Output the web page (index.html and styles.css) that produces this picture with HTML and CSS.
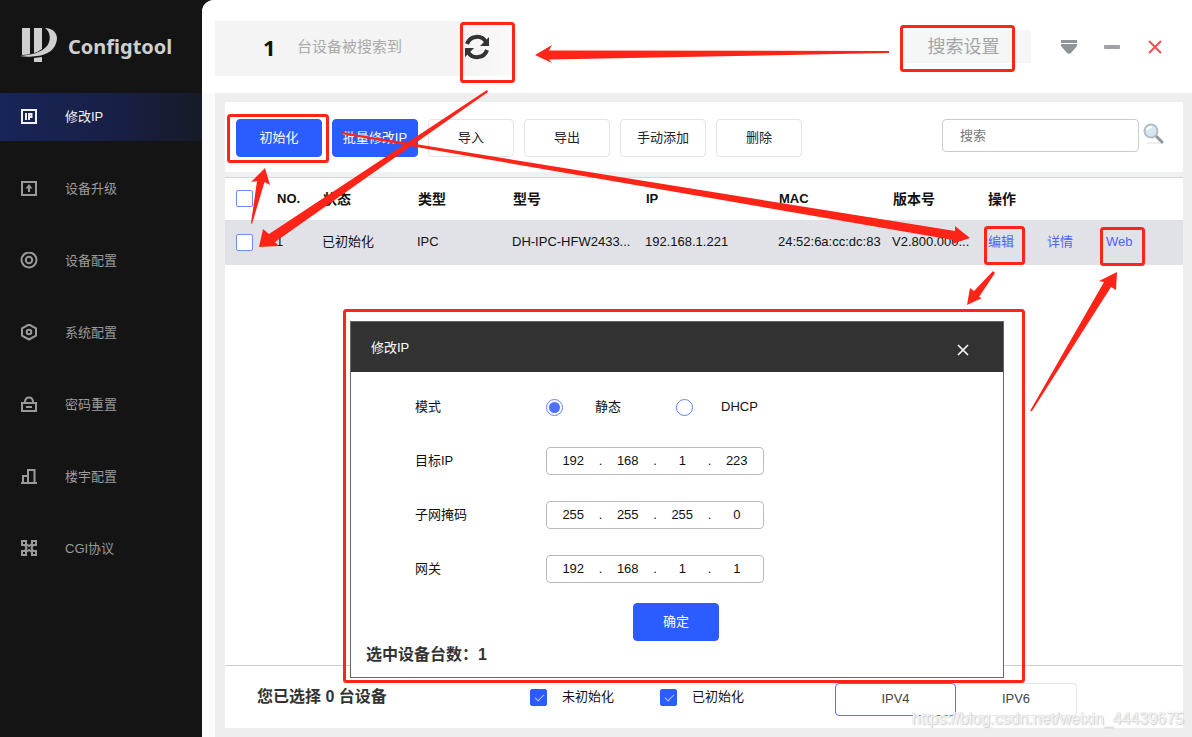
FILE: index.html
```html
<!DOCTYPE html>
<html lang="zh-CN">
<head>
<meta charset="utf-8">
<title>Configtool</title>
<link rel="stylesheet" href="styles.css">
</head>
<body>
<div class="app">
  <aside class="sidebar">
    <div class="brand">
      <svg class="brand-logo" width="38" height="38" viewBox="0 0 38 38" fill="#cfcfcf">
        <path d="M2 2H10V28Q6 29 2 29Z"/>
        <path d="M14 2H22V23Q18 26 14 27Z"/>
        <path d="M25 2C33 2 37 7 37 13C36 23 28 29 17 30C10 31 5 31 0 30C12 29 22 26 27 20C31 15 31 6 25 2Z"/>
        <path d="M14 32L22 31V36H14Z"/>
      </svg>
      <span class="brand-name">Configtool</span>
    </div>
    <nav class="menu">
      <a class="menu-item active" href="#ip">
        <svg width="18" height="18" viewBox="0 0 18 18" fill="none" stroke="currentColor" stroke-width="2"><rect x="2" y="2" width="14" height="13"/><path d="M6 5V12M9 12V6H11.500V9H9"/></svg>
        <span>修改IP</span>
      </a>
      <a class="menu-item" href="#upgrade">
        <svg width="18" height="18" viewBox="0 0 18 18" fill="none" stroke="currentColor" stroke-width="2"><rect x="2" y="2" width="14" height="13"/><path d="M9 12V7"/><path d="M9 4L12.500 8.500H5.500Z" fill="currentColor" stroke="none"/></svg>
        <span>设备升级</span>
      </a>
      <a class="menu-item" href="#device">
        <svg width="18" height="18" viewBox="0 0 18 18" fill="none" stroke="currentColor" stroke-width="2"><circle cx="9" cy="8" r="7.500"/><circle cx="9" cy="8" r="3.200"/></svg>
        <span>设备配置</span>
      </a>
      <a class="menu-item" href="#system">
        <svg width="18" height="18" viewBox="0 0 18 18" fill="none" stroke="currentColor" stroke-width="2"><path d="M9 0.500L16 4.300V11.700L9 15.500L2 11.700V4.300Z"/><circle cx="9" cy="8" r="2.300"/></svg>
        <span>系统配置</span>
      </a>
      <a class="menu-item" href="#password">
        <svg width="18" height="18" viewBox="0 0 18 18" fill="none" stroke="currentColor" stroke-width="2"><rect x="2" y="7" width="14" height="8"/><path d="M5 7V5.500Q5.500 1.500 9 1.500T13 5.500V7M6 11H12"/></svg>
        <span>密码重置</span>
      </a>
      <a class="menu-item" href="#building">
        <svg width="18" height="18" viewBox="0 0 18 18" fill="none" stroke="currentColor" stroke-width="2"><path d="M1 15H17M3 15V8H8V15M8 10V2H14.500V15"/></svg>
        <span>楼宇配置</span>
      </a>
      <a class="menu-item" href="#cgi">
        <svg width="18" height="18" viewBox="0 0 18 18" fill="none" stroke="currentColor" stroke-width="2"><rect x="2" y="1" width="4" height="4"/><rect x="12" y="1" width="4" height="4"/><rect x="2" y="11" width="4" height="4"/><rect x="12" y="11" width="4" height="4"/><path d="M6 4L9 6L12 4M6 12L9 10L12 12M5 5L6.500 8L5 11M13 5L11.500 8L13 11"/></svg>
        <span>CGI协议</span>
      </a>
    </nav>
  </aside>

  <main class="main">
    <header class="topbar">
      <div class="found">
        <strong class="found-count">1</strong>
        <span class="found-text">台设备被搜索到</span>
        <button class="icon-button" type="button" aria-label="刷新">
          <svg width="26" height="26" viewBox="0 0 26 26" fill="none" stroke="#333" stroke-width="4"><path d="M3 10A10.500 10.500 0 0 1 22 8M23 16A10.500 10.500 0 0 1 4 18"/><path d="M25 3V12H16ZM1 23V14H10Z" fill="#333" stroke="none"/></svg>
        </button>
      </div>
      <div class="top-actions">
        <button class="search-settings" type="button">搜索设置</button>
        <div class="window-controls">
          <button class="icon-button" type="button" aria-label="菜单"><svg width="16" height="16" viewBox="0 0 16 16" fill="#8f9496"><path d="M0 1H16V4H0ZM0 5H16V7L10 14Q8 15.500 6 14L0 7Z"/></svg></button>
          <button class="icon-button" type="button" aria-label="最小化"><svg width="16" height="16" viewBox="0 0 16 16" fill="#a0a3a5"><rect y="6" width="16" height="4" rx="1"/></svg></button>
          <button class="icon-button" type="button" aria-label="关闭"><svg width="16" height="16" viewBox="0 0 16 16" stroke="#f04e58" stroke-width="2"><path d="M2 2L14 14M14 2L2 14"/></svg></button>
        </div>
      </div>
    </header>

    <div class="workspace">
      <section class="panel">
        <div class="toolbar">
          <button class="btn primary" type="button">初始化</button>
          <button class="btn primary" type="button">批量修改IP</button>
          <button class="btn" type="button">导入</button>
          <button class="btn" type="button">导出</button>
          <button class="btn" type="button">手动添加</button>
          <button class="btn" type="button">删除</button>
          <form class="search">
            <input class="search-input" type="text" placeholder="搜索" aria-label="搜索">
            <button class="icon-button" type="button" aria-label="查找">
              <svg width="22" height="22" viewBox="0 0 22 22"><ellipse cx="12" cy="20" rx="9" ry="1" fill="#ececec"/><path d="M13 13L19 19" stroke="#8f979c" stroke-width="3" stroke-linecap="round"/><circle cx="8" cy="8" r="6.500" fill="#d5e7f3" stroke="#b5bec5" stroke-width="2"/><path d="M4 7Q5 4 9 4" fill="none" stroke="#fff" stroke-width="2"/></svg>
            </button>
          </form>
        </div>

        <div class="table-area">
          <table class="devices">
            <colgroup><col class="c-check"><col class="c-no"><col class="c-mid"><col class="c-mid"><col class="c-wide"><col class="c-wide"><col class="c-mac"><col class="c-mid"><col></colgroup>
            <thead>
              <tr><th><input class="check" type="checkbox" aria-label="全选"></th><th>NO.</th><th>状态</th><th>类型</th><th>型号</th><th>IP</th><th>MAC</th><th>版本号</th><th>操作</th></tr>
            </thead>
            <tbody>
              <tr><td><input class="check" type="checkbox" aria-label="选择设备 1"></td><td>1</td><td>已初始化</td><td>IPC</td><td>DH-IPC-HFW2433...</td><td>192.168.1.221</td><td>24:52:6a:cc:dc:83</td><td>V2.800.000...</td><td><div class="row-links"><a href="#edit">编辑</a><a href="#detail">详情</a><a href="#web">Web</a></div></td></tr>
            </tbody>
          </table>
        </div>

        <footer class="statusbar">
          <p class="selected">您已选择 0 台设备</p>
          <div class="filters">
            <label class="filter"><input class="check" type="checkbox" checked>未初始化</label>
            <label class="filter"><input class="check" type="checkbox" checked>已初始化</label>
          </div>
          <div class="ip-tabs">
            <button class="ip-tab current" type="button">IPV4</button>
            <button class="ip-tab" type="button">IPV6</button>
          </div>
        </footer>
      </section>
    </div>
  </main>

  <section class="dialog" role="dialog" aria-labelledby="dialog-title">
    <header class="dialog-head">
      <h2 class="dialog-title" id="dialog-title">修改IP</h2>
      <button class="icon-button" type="button" aria-label="关闭对话框"><svg width="12" height="12" viewBox="0 0 12 12" stroke="#fff" stroke-width="1.600"><path d="M1 1L11 11M11 1L1 11"/></svg></button>
    </header>
    <form class="dialog-form">
      <div class="field">
        <span class="field-label">模式</span>
        <div class="modes">
          <label class="mode"><input class="radio" type="radio" name="mode" checked>静态</label>
          <label class="mode"><input class="radio" type="radio" name="mode">DHCP</label>
        </div>
      </div>
      <div class="field">
        <label class="field-label" for="ip1">目标IP</label>
        <div class="ip-box"><input id="ip1" type="text" value="192"><i>.</i><input type="text" value="168" aria-label="目标IP 2"><i>.</i><input type="text" value="1" aria-label="目标IP 3"><i>.</i><input type="text" value="223" aria-label="目标IP 4"></div>
      </div>
      <div class="field">
        <label class="field-label" for="mask1">子网掩码</label>
        <div class="ip-box"><input id="mask1" type="text" value="255"><i>.</i><input type="text" value="255" aria-label="子网掩码 2"><i>.</i><input type="text" value="255" aria-label="子网掩码 3"><i>.</i><input type="text" value="0" aria-label="子网掩码 4"></div>
      </div>
      <div class="field">
        <label class="field-label" for="gw1">网关</label>
        <div class="ip-box"><input id="gw1" type="text" value="192"><i>.</i><input type="text" value="168" aria-label="网关 2"><i>.</i><input type="text" value="1" aria-label="网关 3"><i>.</i><input type="text" value="1" aria-label="网关 4"></div>
      </div>
      <button class="btn primary confirm" type="button">确定</button>
    </form>
    <p class="dialog-count">选中设备台数：1</p>
  </section>

  <svg class="annotations" width="1192" height="737" viewBox="0 0 1192 737" aria-hidden="true">
    <g fill="none" stroke="#ff2418" stroke-width="3">
      <rect x="461.500" y="23.500" width="52" height="58" rx="2"/>
      <rect x="901.500" y="26.500" width="112" height="44" rx="2"/>
      <rect x="228.500" y="115.500" width="99" height="46" rx="2"/>
      <rect x="985.500" y="227.500" width="38" height="36" rx="2"/>
      <rect x="1101.500" y="228.500" width="42" height="36" rx="2"/>
      <rect x="344.500" y="310.500" width="679" height="371" rx="2"/>
    </g>
    <g fill="#ff2418">
      <path d="M535 55L552 45L549 50.500L889 51L889 53L549 59.500L552 63Z"/>
      <path d="M259 247L263 229L269 234L487 90L488 92L275 242L279 246Z"/>
      <path d="M265 168L270 185L264.500 182L252 224L251 223L257 181L251 182Z"/>
      <path d="M970 238L955 226L955 231L341 132L341 134L953 240L952 244Z"/>
      <path d="M967 305L970 288L974 291L993 271L995 273L979 297L982 298Z"/>
      <path d="M1117 272L1116 290L1111 287L1032 411L1030 411L1104 282L1099 281Z"/>
    </g>
  </svg>
  <span class="watermark">https://blog.csdn.net/weixin_44439675</span>
</div>
</body>
</html>
```
FILE: styles.css
```css
* {
  box-sizing: border-box;
}

body {
  margin: 0;
  font: 13px/20px "Liberation Sans", "Noto Sans CJK SC", sans-serif;
  color: #111;
}

button,
input {
  font: inherit;
  color: inherit;
  margin: 0;
}

a {
  text-decoration: none;
}

.app {
  position: relative;
  display: flex;
  min-height: 100vh;
  background: #141414;
  overflow: hidden;
}

/* Sidebar */
.sidebar {
  flex: 0 0 202px;
}

.brand {
  display: flex;
  align-items: center;
  gap: 10px;
  height: 93px;
  padding-left: 20px;
}

.brand-logo {
  margin-bottom: 4px;
}

.brand-name {
  font: 700 20px/24px "Noto Sans", sans-serif;
  color: #cfcfcf;
}

.menu {
  display: grid;
  gap: 24px;
}

.menu-item {
  display: flex;
  align-items: center;
  gap: 27px;
  height: 48px;
  padding-left: 20px;
  color: #9a9a9a;
}

.menu-item.active {
  color: #f2f2f2;
  background: linear-gradient(90deg, #182558, #181f45 60%, #161a27);
}

/* Main area */
.main {
  flex: 1;
  min-width: 0;
  display: flex;
  flex-direction: column;
  background: #fafafc;
  border-top-left-radius: 12px;
  overflow: hidden;
}

.topbar {
  display: flex;
  justify-content: space-between;
  align-items: center;
  height: 93px;
  padding: 0 29px 0 13px;
  background: #fff;
}

.icon-button {
  display: inline-flex;
  padding: 0;
  border: 0;
  background: none;
}

.found {
  display: flex;
  align-items: center;
  width: 298px;
  height: 55px;
  margin-top: 4px;
  padding: 0 23px 4px 48px;
  background: linear-gradient(90deg, #f4f4f4 85%, #fafafa);
}

.found-count {
  width: 34px;
  font: 700 22px/28px "Noto Sans", sans-serif;
}

.found-text {
  flex: 1;
  font-size: 15px;
  color: #aaa;
}

.top-actions {
  display: flex;
  align-items: center;
  gap: 30px;
}

.search-settings {
  width: 131px;
  height: 33px;
  padding: 0 4px 0 0;
  border: 0;
  background: #f5f6f6;
  font-size: 18px;
  color: #a3a5a7;
}

.window-controls {
  display: flex;
  gap: 27px;
}

.workspace {
  flex: 1;
  display: flex;
  margin-left: 13px;
  padding: 9px 9px 9px 10px;
  background: #eee;
}

.panel {
  flex: 1;
  min-width: 0;
  display: flex;
  flex-direction: column;
  background: #fff;
}

.toolbar {
  display: flex;
  gap: 10px;
  height: 70px;
  padding: 17px 18px 0 11px;
}

.btn {
  width: 86px;
  height: 38px;
  padding: 0;
  border: 1px solid #e2e4e7;
  border-radius: 4px;
  background: #fff;
  color: #222;
}

.btn.primary {
  border-color: #2b5cff;
  background: #2b5cff;
  color: #fff;
}

.search {
  display: flex;
  gap: 4px;
  margin-left: auto;
  align-items: flex-start;
}

.search .icon-button {
  padding-top: 4px;
}

.search-input {
  width: 197px;
  height: 33px;
  padding: 0 17px;
  border: 1px solid #ccc;
  border-radius: 4px;
}

.search-input::placeholder {
  color: #777;
}

/* Device table */
.table-area {
  flex: 1;
  border-top: 5px solid #eef0f2;
}

.devices {
  width: 100%;
  table-layout: fixed;
  border-collapse: collapse;
  border-top: 1px solid #d5d8db;
}

.c-check { width: 51px; }
.c-no { width: 46px; }
.c-mid { width: 95px; }
.c-wide { width: 133px; }
.c-mac { width: 114px; }

.devices th,
.devices td {
  padding: 0;
  text-align: left;
  white-space: nowrap;
}

.devices th {
  height: 42px;
  padding-left: 1px;
  font-size: 14px;
}

.devices th:nth-child(2),
.devices th:nth-child(6),
.devices th:nth-child(7) {
  font-size: 13px;
}

.devices td {
  height: 45px;
}

.devices tbody tr {
  background: #e1e2e8;
}

.devices th:first-child,
.devices td:first-child {
  padding-left: 11px;
}

.row-links {
  display: flex;
  gap: 33px;
  padding-left: 1px;
}

.row-links a {
  color: #4a63ff;
}

.check {
  appearance: none;
  display: block;
  width: 17px;
  height: 17px;
  border: 1px solid #6e8cff;
  border-radius: 2px;
  background: #fff;
}

.check:checked {
  border-color: #2b5cff;
  background: #2b5cff;
}

.check:checked::after {
  content: "";
  display: block;
  width: 8px;
  height: 4px;
  margin: 4px 0 0 4px;
  border: solid #b9c9ff;
  border-width: 0 0 1px 1px;
  transform: rotate(-45deg);
}

/* Status bar */
.statusbar {
  display: flex;
  align-items: center;
  height: 63px;
  padding-left: 32px;
  border-top: 1px solid #ccc;
}

.selected,
.dialog-count {
  margin: 0;
  font-size: 16px;
  font-weight: 700;
  color: #333;
}

.selected {
  width: 273px;
}

.filters {
  display: flex;
  gap: 46px;
  width: 305px;
}

.filter {
  display: flex;
  align-items: center;
  gap: 15px;
}

.ip-tabs {
  display: flex;
  padding-top: 4px;
}

.ip-tab {
  width: 121px;
  height: 33px;
  border: 1px solid #e6e6e6;
  border-left: 0;
  border-radius: 4px;
  background: #fff;
  color: #444;
}

.ip-tab.current {
  border: 1px solid #4d70ff;
}

/* Dialog floating over the table */
.dialog {
  position: absolute;
  left: 350px;
  top: 321px;
  width: 654px;
  border: 1px solid #666;
  background: #fff;
}

.dialog-head {
  display: flex;
  align-items: center;
  justify-content: space-between;
  height: 50px;
  padding: 2px 34px 0 20px;
  background: #323232;
  color: #fff;
}

.dialog-head .icon-button {
  padding-top: 4px;
}

.dialog-title {
  margin: 0;
  font-size: 13px;
  font-weight: 400;
}

.dialog-form {
  display: grid;
  gap: 26px;
  padding: 21px 0 0 64px;
}

.field {
  display: grid;
  grid-template-columns: 131px 1fr;
  align-items: center;
  height: 28px;
}

.modes {
  display: flex;
  gap: 55px;
}

.mode {
  display: flex;
  align-items: center;
  gap: 32px;
}

.mode + .mode {
  gap: 28px;
}

.radio {
  appearance: none;
  width: 17px;
  height: 17px;
  border: 1px solid #5f82ff;
  border-radius: 50%;
  background: #fff;
}

.radio:checked {
  padding: 2px;
  background: #4a72ff content-box;
}

.ip-box {
  display: flex;
  align-items: center;
  width: 218px;
  height: 28px;
  padding: 0 5px;
  border: 1px solid #bbb;
  border-radius: 4px;
}

.ip-box input {
  flex: 1;
  min-width: 0;
  padding: 0;
  border: 0;
  background: none;
  text-align: center;
}

.ip-box i {
  width: 12px;
  font-style: normal;
  text-align: center;
}

.confirm {
  margin: -6px 0 0 218px;
}

.dialog-count {
  padding: 4px 0 12px 15px;
}

/* Overlay */
.annotations {
  position: absolute;
  left: 0;
  top: 0;
  pointer-events: none;
}

.watermark {
  position: absolute;
  right: 8px;
  bottom: 8px;
  font-size: 16px;
  color: #f4f4f4;
  text-shadow: 0 0 1px #ccc, 1px 1px 1px #ccc;
}
```
